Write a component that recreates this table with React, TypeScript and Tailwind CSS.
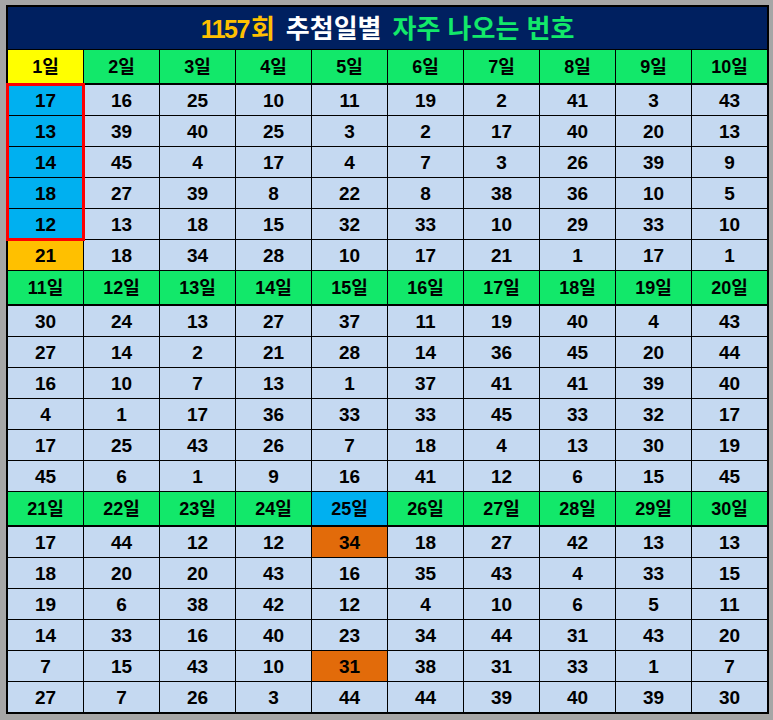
import React from "react"

const groups = [
  {
    start: 1,
    rows: [
      [17, 16, 25, 10, 11, 19, 2, 41, 3, 43],
      [13, 39, 40, 25, 3, 2, 17, 40, 20, 13],
      [14, 45, 4, 17, 4, 7, 3, 26, 39, 9],
      [18, 27, 39, 8, 22, 8, 38, 36, 10, 5],
      [12, 13, 18, 15, 32, 33, 10, 29, 33, 10],
      [21, 18, 34, 28, 10, 17, 21, 1, 17, 1],
    ],
  },
  {
    start: 11,
    rows: [
      [30, 24, 13, 27, 37, 11, 19, 40, 4, 43],
      [27, 14, 2, 21, 28, 14, 36, 45, 20, 44],
      [16, 10, 7, 13, 1, 37, 41, 41, 39, 40],
      [4, 1, 17, 36, 33, 33, 45, 33, 32, 17],
      [17, 25, 43, 26, 7, 18, 4, 13, 30, 19],
      [45, 6, 1, 9, 16, 41, 12, 6, 15, 45],
    ],
  },
  {
    start: 21,
    rows: [
      [17, 44, 12, 12, 34, 18, 27, 42, 13, 13],
      [18, 20, 20, 43, 16, 35, 43, 4, 33, 15],
      [19, 6, 38, 42, 12, 4, 10, 6, 5, 11],
      [14, 33, 16, 40, 23, 34, 44, 31, 43, 20],
      [7, 15, 43, 10, 31, 38, 31, 33, 1, 7],
      [27, 7, 26, 3, 44, 44, 39, 40, 39, 30],
    ],
  },
]

// header cell colour
function headerBg(g: number, c: number) {
  if (g === 0 && c === 0) return "bg-[#ffff00]"
  if (g === 2 && c === 4) return "bg-[#00b0f0]"
  return "bg-[#12e86a]"
}

// data cell colour
function cellBg(g: number, r: number, c: number) {
  if (g === 0 && c === 0) return r < 5 ? "bg-[#00b0f0]" : "bg-[#ffc000]"
  if (g === 2 && c === 4 && (r === 0 || r === 4)) return "bg-[#e26b0a]"
  return "bg-[#c5d9f1]"
}

export default function App() {
  return (
    <div
      className="w-[773px] h-[720px] bg-[#a6a6a6] pt-[5px] pl-[6px]"
      style={{ fontFamily: '"Liberation Sans", "Noto Sans CJK KR", sans-serif' }}
    >
      <div className="relative w-[763px] border-2 border-black bg-black">
        <div className="h-[42px] pt-[2px] bg-[#002060] flex items-center justify-center gap-[11px] text-[26px] font-bold">
          <span className="text-[#ffc000]">
            <span className="text-[25px] tracking-[-1.5px] mr-[2px]">1157</span>회
          </span>
          <span className="text-white">추첨일별</span>
          <span className="text-[#12e86a]">자주 나오는 번호</span>
        </div>

        <div className="mt-px flex flex-col gap-px">
          {groups.map((grp, g) => (
            <div key={g} className="grid grid-cols-10 gap-px">
              {Array.from({ length: 10 }, (_, c) => (
                <div
                  key={"h" + c}
                  className={`${headerBg(g, c)} h-[33px] mb-px pt-[2px] flex items-center justify-center text-[18px] font-bold text-black`}
                >
                  {grp.start + c}일
                </div>
              ))}
              {grp.rows.map((row, r) =>
                row.map((n, c) => (
                  <div
                    key={r + "-" + c}
                    className={`${cellBg(g, r, c)} h-[30px] pt-[2px] flex items-center justify-center text-[19px] font-bold text-black`}
                  >
                    {n}
                  </div>
                ))
              )}
            </div>
          ))}
        </div>

        {/* red selection box over 1일 column */}
        <div className="absolute left-[-2px] top-[76px] w-[79px] h-[158px] border-[3px] border-[#ff0000] pointer-events-none" />
      </div>
    </div>
  )
}
